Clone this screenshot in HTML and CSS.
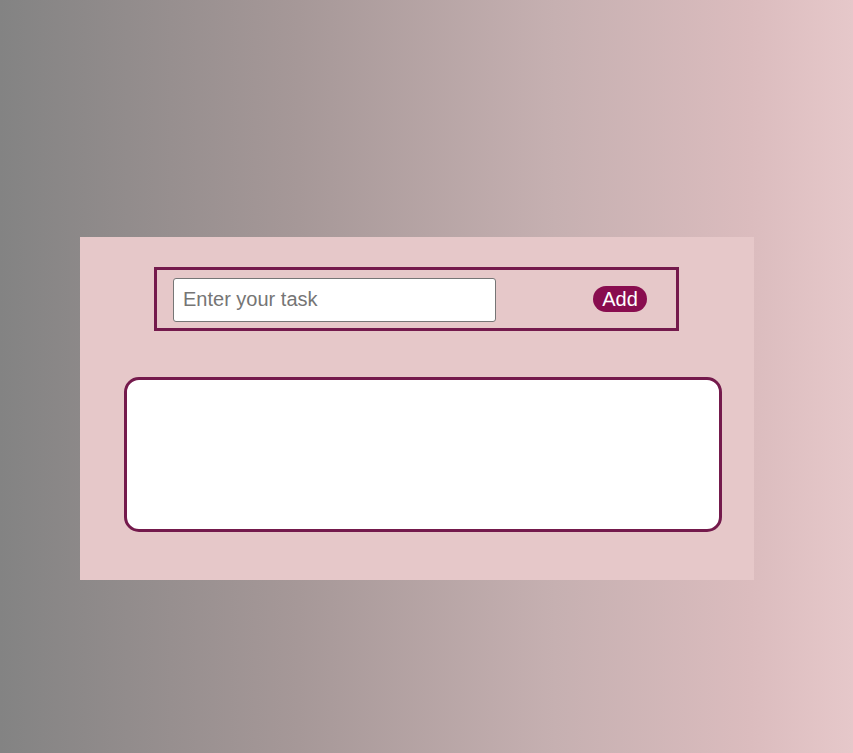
FILE: index.html
```html
<!DOCTYPE html>
<html>
<head>
<meta charset="utf-8">
<link rel="stylesheet" href="styles.css">
</head>
<body>
<div class="card">
  <form class="task-form">
    <input class="task-input" type="text" placeholder="Enter your task">
    <button class="add-btn" type="button">Add</button>
  </form>
  <ul class="task-list"></ul>
</div>
</body>
</html>
```
FILE: styles.css
```css
html, body {
  margin: 0;
  height: 100%;
}
body {
  background: linear-gradient(to right, #838383 0%, #a69898 35%, #c6b0b1 65%, #dbbcbe 88%, #e6c8ca 100%);
  font-family: "Liberation Sans", Arial, sans-serif;
  padding-top: 237px;
  box-sizing: border-box;
}
.card {
  margin-left: 80px;
  width: 674px;
  height: 343px;
  background: #e6c8c9;
  box-sizing: border-box;
  padding-top: 30px;
}
.task-form {
  box-sizing: border-box;
  width: 525px;
  height: 64px;
  margin: 0 0 0 74px;
  border: 3px solid #741a4c;
  display: flex;
  align-items: center;
  justify-content: space-between;
  padding: 0 29px 0 16px;
}
.task-input {
  box-sizing: border-box;
  width: 323px;
  height: 44px;
  margin-top: 2px;
  border: 1px solid #767676;
  border-radius: 3px;
  padding: 0 9px 2px;
  font-family: "Liberation Sans", Arial, sans-serif;
  font-size: 20px;
  color: #222;
  background: #fff;
}
.task-input::placeholder {
  color: #757575;
}
.add-btn {
  box-sizing: border-box;
  width: 54px;
  height: 26px;
  padding: 0;
  border: none;
  border-radius: 13px;
  background: #890d4f;
  color: #fff;
  font-family: "Liberation Sans", Arial, sans-serif;
  font-size: 20px;
  line-height: 26px;
}
.task-list {
  box-sizing: border-box;
  width: 598px;
  height: 155px;
  margin: 46px 0 0 44px;
  padding: 0;
  list-style: none;
  background: #fff;
  border: 3px solid #741a4c;
  border-radius: 15px;
}
```
